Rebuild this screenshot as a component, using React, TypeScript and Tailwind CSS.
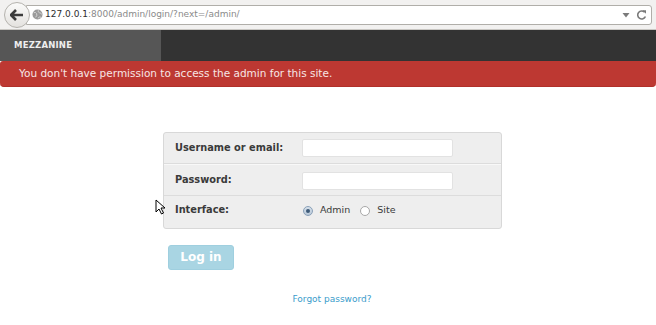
import React from "react";

export default function App() {
  return (
    <div className="w-[656px] h-[325px] bg-white overflow-hidden relative" style={{ fontFamily: '"DejaVu Sans", sans-serif' }}>
      {/* browser chrome */}
      <div className="h-[30px] bg-[#f2f1f0] flex items-center pl-[4px] pr-[4px] border-b border-[#c9c7c3]">
        <div className="w-[26px] h-[26px] rounded-full border border-[#b5b3ae] bg-gradient-to-b from-[#fbfbfa] to-[#e4e2df] flex items-center justify-center z-10 shrink-0">
          <svg width="14" height="12" viewBox="0 0 14 12">
            <path d="M6 1 L1 6 L6 11 M1.5 6 H13" stroke="#3c3c3c" strokeWidth="2.6" fill="none" strokeLinejoin="round" />
          </svg>
        </div>
        <div className="-ml-[4px] flex-1 h-[20px] bg-white border border-[#b0aea9] rounded-r-[3px] flex items-center pl-[5px] pr-[4px]">
          <svg width="11" height="11" viewBox="0 0 12 12" className="shrink-0">
            <circle cx="6" cy="6" r="5.5" fill="#9a9a9a" />
            <path d="M2 4 Q4 3 5 5 Q6 7 4 9 M7 1.5 Q6 3 8 4 Q10 4 10.5 6 M6.5 10 Q8 8 10 9" stroke="#d8d8d8" strokeWidth="1" fill="none" />
          </svg>
          <span className="ml-[2px] text-[9px] leading-none">
            <span className="text-[#2e2e2e]">127.0.0.1</span>
            <span className="text-[#8a8a8a]">:8000/admin/login/?next=/admin/</span>
          </span>
          <div className="flex-1" />
          <svg width="8" height="6" viewBox="0 0 8 6" className="mr-[6px]">
            <path d="M0.5 1 L7.5 1 L4 5.5 Z" fill="#7a7a7a" />
          </svg>
          <svg width="11" height="12" viewBox="0 0 11 12">
            <path d="M8.6 3.2 A4 4 0 1 0 9.4 7.5" stroke="#7a7a7a" strokeWidth="1.6" fill="none" />
            <path d="M6.5 1.2 L10 1.2 L10 4.8 Z" fill="#7a7a7a" />
          </svg>
        </div>
      </div>

      {/* top nav */}
      <div className="h-[31px] bg-[#333333] flex">
        <div className="w-[161px] bg-[#565656] flex items-center pl-[14px]">
          <span className="text-[8.5px] font-bold text-[#eeeeee] tracking-[0.2px]">MEZZANINE</span>
        </div>
      </div>

      {/* alert */}
      <div className="h-[26px] bg-[#bd3832] rounded-b-[4px] rounded-tl-[3px] flex items-center pl-[19px] border-b border-[#b0302a]">
        <span className="text-[10.5px] text-[#f7e6e5]">You don't have permission to access the admin for this site.</span>
      </div>

      {/* form */}
      <div className="mt-[45px] ml-[163px] w-[339px] bg-[#eeeeee] border border-[#d8d8d8] rounded-[3px]">
        <div className="h-[31px] flex items-center border-b border-[#dcdcdc] shadow-[0_1px_0_#f8f8f8]">
          <label className="w-[138px] pl-[11px] text-[9.8px] font-bold text-[#3a3a3a]">Username or email:</label>
          <div className="w-[151px] h-[18px] bg-white border border-[#e2e2e2] rounded-[2px]" />
        </div>
        <div className="h-[32px] flex items-center border-b border-[#dcdcdc] pt-[2px]">
          <label className="w-[138px] pl-[11px] text-[9.8px] font-bold text-[#3a3a3a]">Password:</label>
          <div className="w-[151px] h-[18px] bg-white border border-[#e2e2e2] rounded-[2px]" />
        </div>
        <div className="h-[32px] flex items-center pb-[4px]">
          <label className="w-[138px] pl-[11px] text-[9.8px] font-bold text-[#3a3a3a]">Interface:</label>
          <div className="flex items-center ml-[1px]">
            <span className="w-[10px] h-[10px] rounded-full border border-[#8aa0b8] bg-gradient-to-b from-[#d6e0ea] to-[#b8c8d8] flex items-center justify-center mt-[2px]">
              <span className="w-[4px] h-[4px] rounded-full bg-[#3d5a78]" />
            </span>
            <span className="ml-[7px] text-[9.5px] text-[#3a3a3a]">Admin</span>
            <span className="ml-[10px] w-[10px] h-[10px] rounded-full border border-[#a8a8a8] bg-white mt-[2px]" />
            <span className="ml-[7px] text-[9.5px] text-[#3a3a3a]">Site</span>
          </div>
        </div>
      </div>

      <div className="mt-[15px] ml-[168px]">
        <button className="w-[66px] h-[25px] bg-[#a9d5e3] border border-[#9fcfdf] rounded-[3px] text-white font-bold text-[12px] leading-none">
          Log in
        </button>
      </div>

      <div className="mt-[23px] flex justify-center pl-[8px]">
        <span className="text-[9px] text-[#3a9ccb]">Forgot password?</span>
      </div>

      {/* mouse cursor */}
      <svg className="absolute left-[155px] top-[199px]" width="12" height="17" viewBox="0 0 12 17">
        <path d="M1 1 L1 13 L4 10 L6.5 15 L8.5 14 L6 9 L10 9 Z" fill="#ffffff" stroke="#000000" strokeWidth="1" strokeLinejoin="round" />
      </svg>
    </div>
  );
}
